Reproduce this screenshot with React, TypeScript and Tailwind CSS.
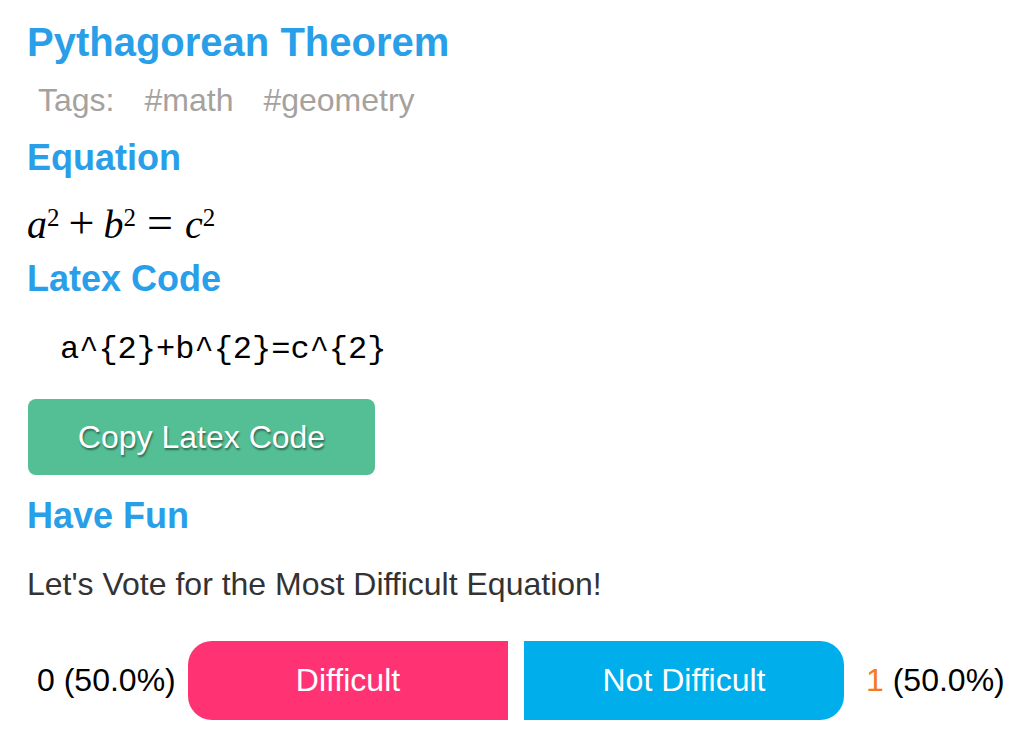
import { useState } from 'react';

export default function App() {
  const [votes, setVotes] = useState({ difficult: 0, notDifficult: 1 });
  // the original page shows 50.0% on both sides
  const leftPct = '50.0';
  const rightPct = '50.0';

  return (
    <div className="min-h-[730px] bg-white pl-[27px] pt-[19px] font-['Liberation_Sans',Arial,sans-serif]">
      <h1 className="text-[40px] leading-[46px] font-bold text-[#289fe8]">Pythagorean Theorem</h1>

      <div className="mt-[17px] ml-[11px] flex gap-[30px] text-[32px] leading-[37px] text-[#a5a29e]">
        <span>Tags:</span>
        <span>#math</span>
        <span>#geometry</span>
      </div>

      <h2 className="mt-[19px] text-[36px] leading-[40px] font-bold text-[#289fe8]">Equation</h2>
      <div className="mt-[22px] h-[44px] whitespace-nowrap text-[40px] leading-[44px] text-black font-['Liberation_Serif','Times_New_Roman',serif]">
        <span className="italic">a</span>
        <sup className="text-[25px]">2</sup>
        <span className="ml-[9px] text-[46px] leading-none">+</span>
        <span className="ml-[9px] italic">b</span>
        <sup className="text-[25px]">2</sup>
        <span className="ml-[11px] text-[46px] leading-none">=</span>
        <span className="ml-[12px] italic">c</span>
        <sup className="text-[25px]">2</sup>
      </div>

      <h2 className="mt-[15px] text-[36px] leading-[40px] font-bold text-[#289fe8]">Latex Code</h2>
      <pre className="mt-[32px] pl-[33px] text-[32px] leading-[37px] text-black font-['Liberation_Mono','Courier_New',monospace]">
        a^{'{'}2{'}'}+b^{'{'}2{'}'}=c^{'{'}2{'}'}
      </pre>

      <button className="mt-[31px] ml-[1px] flex h-[76px] w-[347px] items-center justify-center rounded-lg bg-[#54be95] text-[32px] leading-[37px] text-white [text-shadow:1px_2px_2px_rgba(0,0,0,0.45)]">
        Copy Latex Code
      </button>

      <h2 className="mt-[21px] text-[36px] leading-[40px] font-bold text-[#289fe8]">Have Fun</h2>
      <p className="mt-[30px] text-[32px] leading-[37px] text-[#333333]">Let's Vote for the Most Difficult Equation!</p>

      <div className="mt-[38px] flex items-center text-[32px] leading-[37px]">
        <span className="ml-[10px] w-[151px] text-black">
          {votes.difficult} ({leftPct}%)
        </span>
        <button
          className="flex h-[79px] w-[320px] items-center justify-center rounded-l-[24px] bg-[#ff3374] text-white"
          onClick={() => setVotes((v) => ({ ...v }))}
        >
          Difficult
        </button>
        <button
          className="ml-[16px] flex h-[79px] w-[320px] items-center justify-center rounded-r-[24px] bg-[#00aeeb] text-white"
          onClick={() => setVotes((v) => ({ ...v }))}
        >
          Not Difficult
        </button>
        <span className="ml-[22px] text-black">
          <span className="text-[#f47b20]">{votes.notDifficult}</span> ({rightPct}%)
        </span>
      </div>
    </div>
  );
}
